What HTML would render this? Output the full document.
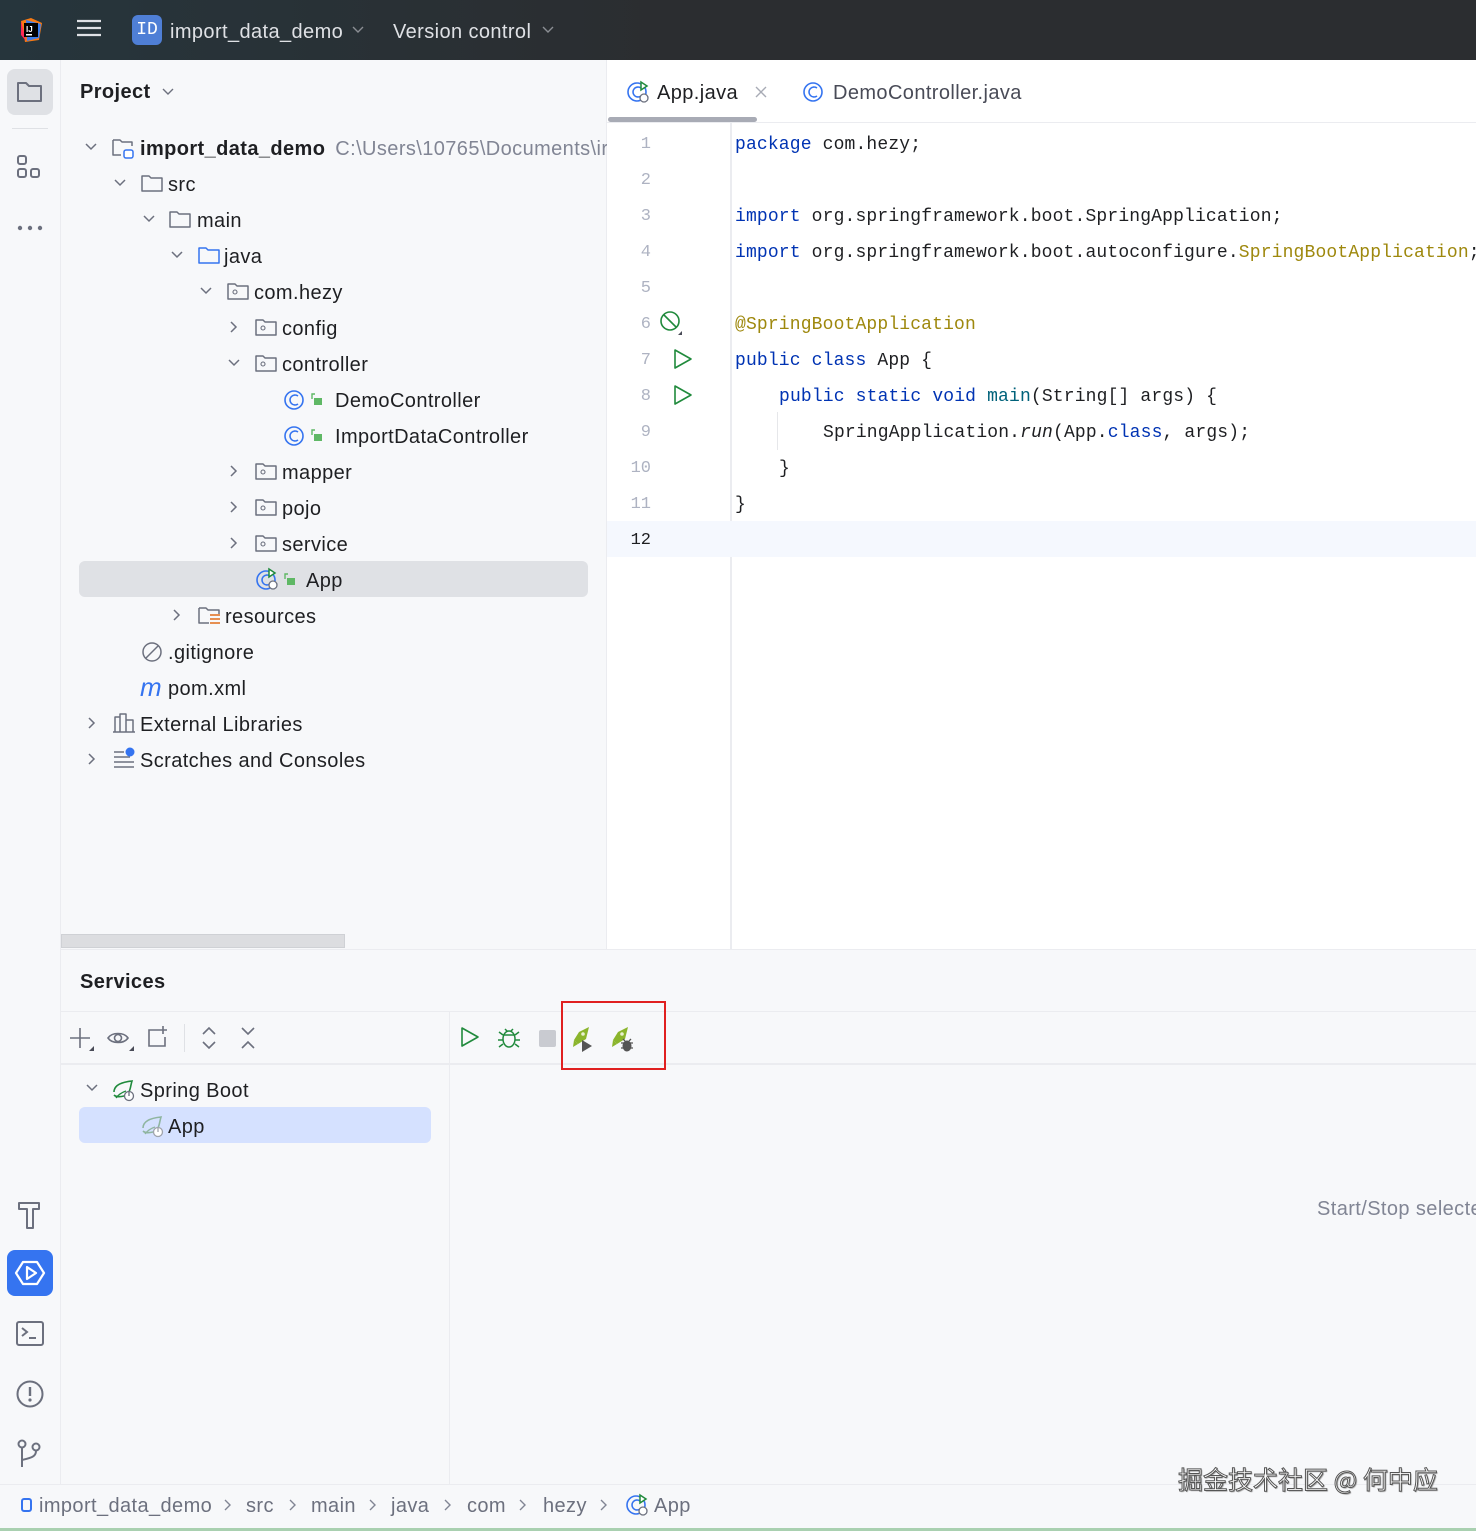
<!DOCTYPE html>
<html><head><meta charset="utf-8">
<style>
*{margin:0;padding:0;box-sizing:border-box}
body{width:1476px;height:1531px;position:relative;overflow:hidden;background:#f7f8fa;font-family:"Liberation Sans","Noto Sans CJK SC",sans-serif;color:#1e1f22}
.a{position:absolute;white-space:nowrap}
.t{font-size:20px;line-height:24px;letter-spacing:0.4px;margin-top:2px}
.code{font-family:"Liberation Mono",monospace;font-size:18px;line-height:24px;letter-spacing:0.15px;margin-top:2px}
.kw{color:#0033b3}.an{color:#9e880d}.mt{color:#00627a}
.ln{font-family:"Liberation Mono",monospace;font-size:17px;color:#aeb3c2;width:30px;text-align:right;margin-top:4px}
svg{position:absolute;overflow:visible}
</style></head><body>
<div class="a" style="left:0;top:0;width:1476px;height:60px;background:linear-gradient(90deg,#26353c 0%,#2b2d30 45%,#2b2d30 100%)"></div>
<svg style="left:18px;top:17px" width="26" height="26" viewBox="0 0 26 26"><path d="M3 4l10-3 11 5-3 17-14 2z" fill="#f97a12"/><path d="M8 3l15 4-2 14-12 3z" fill="#3b7de9"/><path d="M3 4l5 20 -5-6z" fill="#fe2857"/><rect x="6" y="6" width="14" height="14" fill="#000"/><text x="8" y="15" fill="#fff" font-size="8" font-family="Liberation Sans" font-weight="bold">IJ</text><rect x="8" y="17" width="6" height="1.5" fill="#fff"/></svg>
<svg style="left:76px;top:19px" width="26" height="22"><path d="M1 2h24M1 9h24M1 16h24" stroke="#dfe1e5" stroke-width="2.2"/></svg>
<div class="a" style="left:132px;top:15px;width:30px;height:30px;border-radius:6px;background:#4f7fd6;color:#fff;font-family:'Liberation Mono',monospace;font-size:18px;line-height:30px;text-align:center">ID</div>
<div class="a t" style="left:170px;top:18px;color:#dfe1e5">import_data_demo</div>
<svg style="left:352px;top:26px" width="12" height="8"><path d="M1 1l5 5 5-5" stroke="#8b8e94" fill="none" stroke-width="1.4"/></svg>
<div class="a t" style="left:393px;top:18px;color:#dfe1e5">Version control</div>
<svg style="left:542px;top:26px" width="12" height="8"><path d="M1 1l5 5 5-5" stroke="#8b8e94" fill="none" stroke-width="1.4"/></svg>

<div class="a" style="left:60px;top:60px;width:1px;height:1425px;background:#ebecf0"></div>
<div class="a" style="left:7px;top:69px;width:46px;height:46px;border-radius:8px;background:#dfe1e5"></div>
<svg style="left:16px;top:80px" width="28" height="24"><path d="M2 3h8l3 3h12v15H2z" stroke="#6c707e" stroke-width="2" fill="none" stroke-linejoin="round"/></svg>
<div class="a" style="left:12px;top:128px;width:36px;height:1px;background:#dfe1e5"></div>
<svg style="left:17px;top:155px" width="26" height="28"><rect x="1" y="1" width="8" height="8" rx="2" stroke="#6c707e" stroke-width="2" fill="none"/><rect x="1" y="14" width="8" height="8" rx="2" stroke="#6c707e" stroke-width="2" fill="none"/><rect x="14" y="14" width="8" height="8" rx="2" stroke="#6c707e" stroke-width="2" fill="none"/></svg>
<svg style="left:17px;top:225px" width="28" height="6"><circle cx="3" cy="3" r="2.2" fill="#6c707e"/><circle cx="13" cy="3" r="2.2" fill="#6c707e"/><circle cx="23" cy="3" r="2.2" fill="#6c707e"/></svg>
<svg style="left:16px;top:1200px" width="28" height="30"><path d="M3 3h20v6H17v19h-6V9H3z M3 3v5" stroke="#6c707e" stroke-width="2" fill="none" stroke-linejoin="round"/></svg>
<div class="a" style="left:7px;top:1250px;width:46px;height:46px;border-radius:8px;background:#3574f0"></div>
<svg style="left:14px;top:1257px" width="32" height="32"><path d="M9 5h14l7 11-7 11H9L2 16z" stroke="#fff" stroke-width="2.2" fill="none" stroke-linejoin="round"/><path d="M13 10l9 6-9 6z" stroke="#fff" stroke-width="2.2" fill="none" stroke-linejoin="round"/></svg>
<svg style="left:16px;top:1320px" width="28" height="28"><rect x="1" y="2" width="26" height="23" rx="2" stroke="#6c707e" stroke-width="2" fill="none"/><path d="M6 8l5 4-5 4M13 18h7" stroke="#6c707e" stroke-width="2" fill="none"/></svg>
<svg style="left:16px;top:1380px" width="28" height="28"><circle cx="14" cy="14" r="12.5" stroke="#6c707e" stroke-width="2" fill="none"/><path d="M14 7v9" stroke="#6c707e" stroke-width="2.4"/><circle cx="14" cy="20" r="1.6" fill="#6c707e"/></svg>
<svg style="left:17px;top:1439px" width="28" height="30"><circle cx="5" cy="5" r="3.5" stroke="#6c707e" stroke-width="2" fill="none"/><circle cx="19" cy="8" r="3.5" stroke="#6c707e" stroke-width="2" fill="none"/><path d="M5 9v19M19 12c0 6-6 7-14 9" stroke="#6c707e" stroke-width="2" fill="none"/></svg>

<div class="a" style="left:80px;top:80px;font-size:20px;font-weight:bold;line-height:24px;letter-spacing:0.4px">Project</div>
<svg style="left:162px;top:88px" width="12" height="8"><path d="M1 1l5 5 5-5" stroke="#6c707e" fill="none" stroke-width="1.4"/></svg>
<div class="a" style="left:606px;top:60px;width:1px;height:890px;background:#ebecf0"></div>
<div class="a" style="left:79px;top:561px;width:509px;height:36px;border-radius:6px;background:#dfe1e5"></div>
<div class="a" style="left:61px;top:934px;width:284px;height:14px;background:#dcdde0;border:1px solid #cfd1d5"></div>

<svg style="left:0;top:0" width="610" height="800">
<g stroke="#6c707e" stroke-width="1.5" fill="none">
<path d="M86 144l5 5 5-5"/><path d="M115 180l5 5 5-5"/><path d="M144 216l5 5 5-5"/><path d="M172 252l5 5 5-5"/><path d="M201 288l5 5 5-5"/>
<path d="M231 322l5 5-5 5"/><path d="M229 360l5 5 5-5"/><path d="M231 466l5 5-5 5"/><path d="M231 502l5 5-5 5"/><path d="M231 538l5 5-5 5"/>
<path d="M174 610l5 5-5 5"/><path d="M89 718l5 5-5 5"/><path d="M89 754l5 5-5 5"/>
</g>
<g stroke="#6c707e" stroke-width="1.5" fill="none" stroke-linejoin="round">
<path d="M113 140h7l2 2h10v4M113 140v15h8"/>
<path d="M142 176h7l2 2h11v13H142z"/>
<path d="M170 212h7l2 2h11v13H170z"/>
<path d="M228 284h7l2 2h11v13H228z"/><rect x="233" y="290" width="4" height="4" rx="2" stroke-width="1.1"/>
<path d="M256 320h7l2 2h11v13H256z"/><rect x="261" y="326" width="4" height="4" rx="2" stroke-width="1.1"/>
<path d="M256 356h7l2 2h11v13H256z"/><rect x="261" y="362" width="4" height="4" rx="2" stroke-width="1.1"/>
<path d="M256 464h7l2 2h11v13H256z"/><rect x="261" y="470" width="4" height="4" rx="2" stroke-width="1.1"/>
<path d="M256 500h7l2 2h11v13H256z"/><rect x="261" y="506" width="4" height="4" rx="2" stroke-width="1.1"/>
<path d="M256 536h7l2 2h11v13H256z"/><rect x="261" y="542" width="4" height="4" rx="2" stroke-width="1.1"/>
<path d="M199 608h7l2 2h11v4M199 608v15h10"/>
<circle cx="152" cy="652" r="9"/><path d="M146 658l12-12"/>
<path d="M115 732v-15h5v15M120 732v-18h6v18M126 732v-12h7v12M113 732h22"/>
</g>
<rect x="124" y="150" width="9" height="8" rx="2" stroke="#3574f0" stroke-width="1.5" fill="#fff"/>
<path d="M199 248h7l2 2h11v13H199z" stroke="#3574f0" stroke-width="1.5" fill="none" stroke-linejoin="round"/>
<path d="M210 615h10M210 619h10M210 623h10" stroke="#e06c1a" stroke-width="1.6"/>
<g stroke="#3574f0" stroke-width="1.6" fill="none">
<circle cx="294" cy="400" r="9"/><path d="M298 396a5 5 0 1 0 0 8"/>
<circle cx="294" cy="436" r="9"/><path d="M298 432a5 5 0 1 0 0 8"/>
<circle cx="266" cy="580" r="9"/><path d="M270 576a5 5 0 1 0 0 8"/>
</g>
<path d="M269 569v8l6-4z" fill="#fff" stroke="#208a3c" stroke-width="1.5"/>
<circle cx="273" cy="585" r="4" fill="#fff" stroke="#6c707e" stroke-width="1.3"/>
<g fill="#5fb865"><rect x="314" y="398" width="8" height="7"/><rect x="314" y="434" width="8" height="7"/><rect x="287" y="578" width="8" height="7"/></g>
<g stroke="#5fb865" stroke-width="1.4" fill="none"><path d="M312 399v-5h3"/><path d="M312 435v-5h3"/><path d="M285 579v-5h3"/></g>
<g stroke="#6c707e" stroke-width="1.6"><path d="M114 752h10M114 757h16M114 762h20M114 767h20"/></g>
<circle cx="130" cy="752" r="4.5" fill="#3574f0"/>
</svg>
<div class="a" style="left:140px;top:674px;font-size:26px;font-style:italic;color:#3574f0;font-family:'Liberation Sans';line-height:26px">m</div>

<div class="a t" style="left:140px;top:135px"><b>import_data_demo</b> <span style="color:#818594;margin-left:4px">C:\Users\10765\Documents\ir</span></div>
<div class="a t" style="left:168px;top:171px">src</div>
<div class="a t" style="left:197px;top:207px">main</div>
<div class="a t" style="left:224px;top:243px">java</div>
<div class="a t" style="left:254px;top:279px">com.hezy</div>
<div class="a t" style="left:282px;top:315px">config</div>
<div class="a t" style="left:282px;top:351px">controller</div>
<div class="a t" style="left:335px;top:387px">DemoController</div>
<div class="a t" style="left:335px;top:423px">ImportDataController</div>
<div class="a t" style="left:282px;top:459px">mapper</div>
<div class="a t" style="left:282px;top:495px">pojo</div>
<div class="a t" style="left:282px;top:531px">service</div>
<div class="a t" style="left:306px;top:567px">App</div>
<div class="a t" style="left:225px;top:603px">resources</div>
<div class="a t" style="left:168px;top:639px">.gitignore</div>
<div class="a t" style="left:168px;top:675px">pom.xml</div>
<div class="a t" style="left:140px;top:711px">External Libraries</div>
<div class="a t" style="left:140px;top:747px">Scratches and Consoles</div>

<div class="a" style="left:607px;top:60px;width:869px;height:890px;background:#fff"></div>
<div class="a" style="left:607px;top:122px;width:869px;height:1px;background:#ebecf0"></div>
<div class="a" style="left:608px;top:117px;width:149px;height:5px;border-radius:3px;background:#a8abb5"></div>
<svg style="left:626px;top:80px" width="26" height="26"><circle cx="11" cy="12" r="9" stroke="#3574f0" stroke-width="1.6" fill="none"/><path d="M15 8a5 5 0 1 0 0 8" stroke="#3574f0" stroke-width="1.6" fill="none"/><path d="M15 2v8l6-4z" fill="#fff" stroke="#208a3c" stroke-width="1.5"/><circle cx="18" cy="18" r="4" fill="#fff" stroke="#6c707e" stroke-width="1.3"/></svg>
<div class="a t" style="left:657px;top:79px">App.java</div>
<svg style="left:755px;top:86px" width="12" height="12"><path d="M1 1l10 10M11 1L1 11" stroke="#a8abb5" stroke-width="1.4"/></svg>
<svg style="left:803px;top:82px" width="22" height="22"><circle cx="10" cy="10" r="9" stroke="#3574f0" stroke-width="1.6" fill="none"/><path d="M14 6a5 5 0 1 0 0 8" stroke="#3574f0" stroke-width="1.6" fill="none"/></svg>
<div class="a t" style="left:833px;top:79px;color:#494b57">DemoController.java</div>
<div class="a" style="left:730px;top:123px;width:2px;height:827px;background:#ebecf0"></div>
<div class="a" style="left:607px;top:521px;width:869px;height:36px;background:#f5f8fe"></div>
<div class="a" style="left:777px;top:412px;width:1px;height:38px;background:#e6e7ea"></div>

<div class="a ln" style="left:621px;top:131px">1</div>
<div class="a ln" style="left:621px;top:167px">2</div>
<div class="a ln" style="left:621px;top:203px">3</div>
<div class="a ln" style="left:621px;top:239px">4</div>
<div class="a ln" style="left:621px;top:275px">5</div>
<div class="a ln" style="left:621px;top:311px">6</div>
<div class="a ln" style="left:621px;top:347px">7</div>
<div class="a ln" style="left:621px;top:383px">8</div>
<div class="a ln" style="left:621px;top:419px">9</div>
<div class="a ln" style="left:621px;top:455px">10</div>
<div class="a ln" style="left:621px;top:491px">11</div>
<div class="a ln" style="left:621px;top:527px;color:#1e1f22">12</div>
<svg style="left:660px;top:311px" width="26" height="26"><circle cx="10" cy="10" r="9" stroke="#208a3c" stroke-width="1.6" fill="none"/><path d="M4 4l12 12" stroke="#208a3c" stroke-width="1.6"/><path d="M22 20v4h-4z" fill="#494b57"/></svg>
<svg style="left:673px;top:348px" width="22" height="22"><path d="M2 2l16 9-16 9z" stroke="#208a3c" stroke-width="1.6" fill="none" stroke-linejoin="round"/></svg>
<svg style="left:673px;top:384px" width="22" height="22"><path d="M2 2l16 9-16 9z" stroke="#208a3c" stroke-width="1.6" fill="none" stroke-linejoin="round"/></svg>

<div class="a code" style="left:735px;top:131px"><span class="kw">package</span> com.hezy;</div>
<div class="a code" style="left:735px;top:203px"><span class="kw">import</span> org.springframework.boot.SpringApplication;</div>
<div class="a code" style="left:735px;top:239px"><span class="kw">import</span> org.springframework.boot.autoconfigure.<span class="an">SpringBootApplication</span>;</div>
<div class="a code an" style="left:735px;top:311px">@SpringBootApplication</div>
<div class="a code" style="left:735px;top:347px"><span class="kw">public class</span> App {</div>
<div class="a code" style="left:779px;top:383px"><span class="kw">public static void</span> <span class="mt">main</span>(String[] args) {</div>
<div class="a code" style="left:823px;top:419px">SpringApplication.<i>run</i>(App.<span class="kw">class</span>, args);</div>
<div class="a code" style="left:779px;top:455px">}</div>
<div class="a code" style="left:735px;top:491px">}</div>

<div class="a" style="left:61px;top:949px;width:1415px;height:1px;background:#ebecf0"></div>
<div class="a" style="left:80px;top:970px;font-size:20px;font-weight:bold;line-height:24px;letter-spacing:0.4px">Services</div>
<div class="a" style="left:61px;top:1011px;width:1415px;height:1px;background:#ebecf0"></div>
<div class="a" style="left:61px;top:1063px;width:1415px;height:2px;background:#ebecf0"></div>
<div class="a" style="left:449px;top:1012px;width:1px;height:472px;background:#ebecf0"></div>
<div class="a" style="left:184px;top:1024px;width:1px;height:28px;background:#dfe1e5"></div>
<svg style="left:68px;top:1024px" width="200" height="30">
<g stroke="#6c707e" stroke-width="1.6" fill="none">
<path d="M12 4v20M2 14h20"/>
<path d="M40 14c4-6 16-6 20 0c-4 6-16 6-20 0z"/><circle cx="50" cy="14" r="3.5"/>
<path d="M92 6H81v16h16V13M95 2v8M91 6h8"/>
<path d="M135 10l6-6 6 6M135 18l6 6 6-6"/>
<path d="M174 4l6 6 6-6M174 24l6-6 6 6"/>
</g>
<path d="M26 22v5h-5z M66 22v5h-5z" fill="#494b57"/>
</svg>
<svg style="left:460px;top:1026px" width="200" height="30">
<path d="M2 2l16 9-16 9z" stroke="#208a3c" stroke-width="1.6" fill="none" stroke-linejoin="round"/>
<g stroke="#208a3c" stroke-width="1.5" fill="none"><ellipse cx="49" cy="13" rx="6" ry="8"/><path d="M43 9h12M39 6l4 3M59 6l-4 3M38 14h5M55 14h5M39 21l4-3M59 21l-4-3M45 3l2 2M53 3l-2 2"/></g>
<rect x="79" y="4" width="17" height="17" rx="2" fill="#c9cbd1"/>
<path d="M129 1l-10 5-5 8 4 4 8-5z" fill="#8bb52c"/><path d="M114 14l-1 7 5-3z" fill="#8bb52c"/><circle cx="123" cy="8" r="1.8" fill="#e8f0d0"/>
<path d="M122 14l10 6-10 6z" fill="#555"/>
<path d="M168 1l-10 5-5 8 4 4 8-5z" fill="#8bb52c"/><path d="M153 14l-1 7 5-3z" fill="#8bb52c"/><circle cx="162" cy="8" r="1.8" fill="#e8f0d0"/>
<ellipse cx="167" cy="20" rx="4.5" ry="5.5" fill="#555"/><path d="M161 17h12M161 22h12M163 13l2 2M171 13l-2 2" stroke="#555" stroke-width="1.3"/>
</svg>
<div class="a" style="left:561px;top:1001px;width:105px;height:69px;border:2px solid #e02020"></div>

<svg style="left:86px;top:1084px" width="12" height="8"><path d="M1 1l5 5 5-5" stroke="#6c707e" fill="none" stroke-width="1.5"/></svg>
<div class="a" style="left:79px;top:1107px;width:352px;height:36px;border-radius:6px;background:#d5e1ff"></div>
<svg style="left:111px;top:1078px" width="26" height="26"><path d="M3 14c0-7 8-10 18-11-2 6-1 12-8 15-4 1-8 1-10-1" stroke="#208a3c" stroke-width="1.6" fill="none"/><path d="M5 20c3-4 7-6 10-7" stroke="#208a3c" stroke-width="1.4" fill="none"/><circle cx="18" cy="18" r="4.5" fill="#fff" stroke="#6c707e" stroke-width="1.3"/><path d="M18 14v4" stroke="#6c707e" stroke-width="1.3"/></svg>
<div class="a t" style="left:140px;top:1077px">Spring Boot</div>
<svg style="left:140px;top:1114px" width="26" height="26"><path d="M3 14c0-7 8-10 18-11-2 6-1 12-8 15-4 1-8 1-10-1" stroke="#8fb5a0" stroke-width="1.6" fill="none"/><path d="M5 20c3-4 7-6 10-7" stroke="#8fb5a0" stroke-width="1.4" fill="none"/><circle cx="18" cy="18" r="4.5" fill="#fff" stroke="#a0a4ad" stroke-width="1.3"/><path d="M18 14v4" stroke="#a0a4ad" stroke-width="1.3"/></svg>
<div class="a t" style="left:168px;top:1113px">App</div>
<div class="a t" style="left:1317px;top:1195px;color:#818594">Start/Stop selecte</div>

<div class="a" style="left:0;top:1484px;width:1476px;height:1px;background:#ebecf0"></div>
<div class="a" style="left:0;top:1528px;width:1476px;height:3px;background:#a9d0b0"></div>
<div class="a" style="left:21px;top:1498px;width:11px;height:14px;border:2px solid #3574f0;border-radius:3px"></div>
<div class="a t" style="left:39px;top:1492px;color:#6c707e">import_data_demo</div>
<div class="a t" style="left:246px;top:1492px;color:#6c707e">src</div>
<div class="a t" style="left:311px;top:1492px;color:#6c707e">main</div>
<div class="a t" style="left:391px;top:1492px;color:#6c707e">java</div>
<div class="a t" style="left:467px;top:1492px;color:#6c707e">com</div>
<div class="a t" style="left:543px;top:1492px;color:#6c707e">hezy</div>
<div class="a t" style="left:654px;top:1492px;color:#6c707e">App</div>
<svg style="left:0;top:1495px" width="620" height="20"><g stroke="#818594" stroke-width="1.4" fill="none"><path d="M225 5l5 5-5 5"/><path d="M290 5l5 5-5 5"/><path d="M370 5l5 5-5 5"/><path d="M445 5l5 5-5 5"/><path d="M520 5l5 5-5 5"/><path d="M601 5l5 5-5 5"/></g></svg>
<svg style="left:625px;top:1493px" width="26" height="26"><circle cx="11" cy="12" r="9" stroke="#3574f0" stroke-width="1.6" fill="none"/><path d="M15 8a5 5 0 1 0 0 8" stroke="#3574f0" stroke-width="1.6" fill="none"/><path d="M15 2v8l6-4z" fill="#fff" stroke="#208a3c" stroke-width="1.5"/><circle cx="18" cy="18" r="4" fill="#fff" stroke="#6c707e" stroke-width="1.3"/></svg>
<div class="a" style="left:1178px;top:1464px;font-size:25px;line-height:30px;color:#fff;-webkit-text-stroke:1px #555;font-family:'Noto Sans CJK SC',sans-serif;text-shadow:1px 1px 1px #888">掘金技术社区 @ 何中应</div>
</body></html>
